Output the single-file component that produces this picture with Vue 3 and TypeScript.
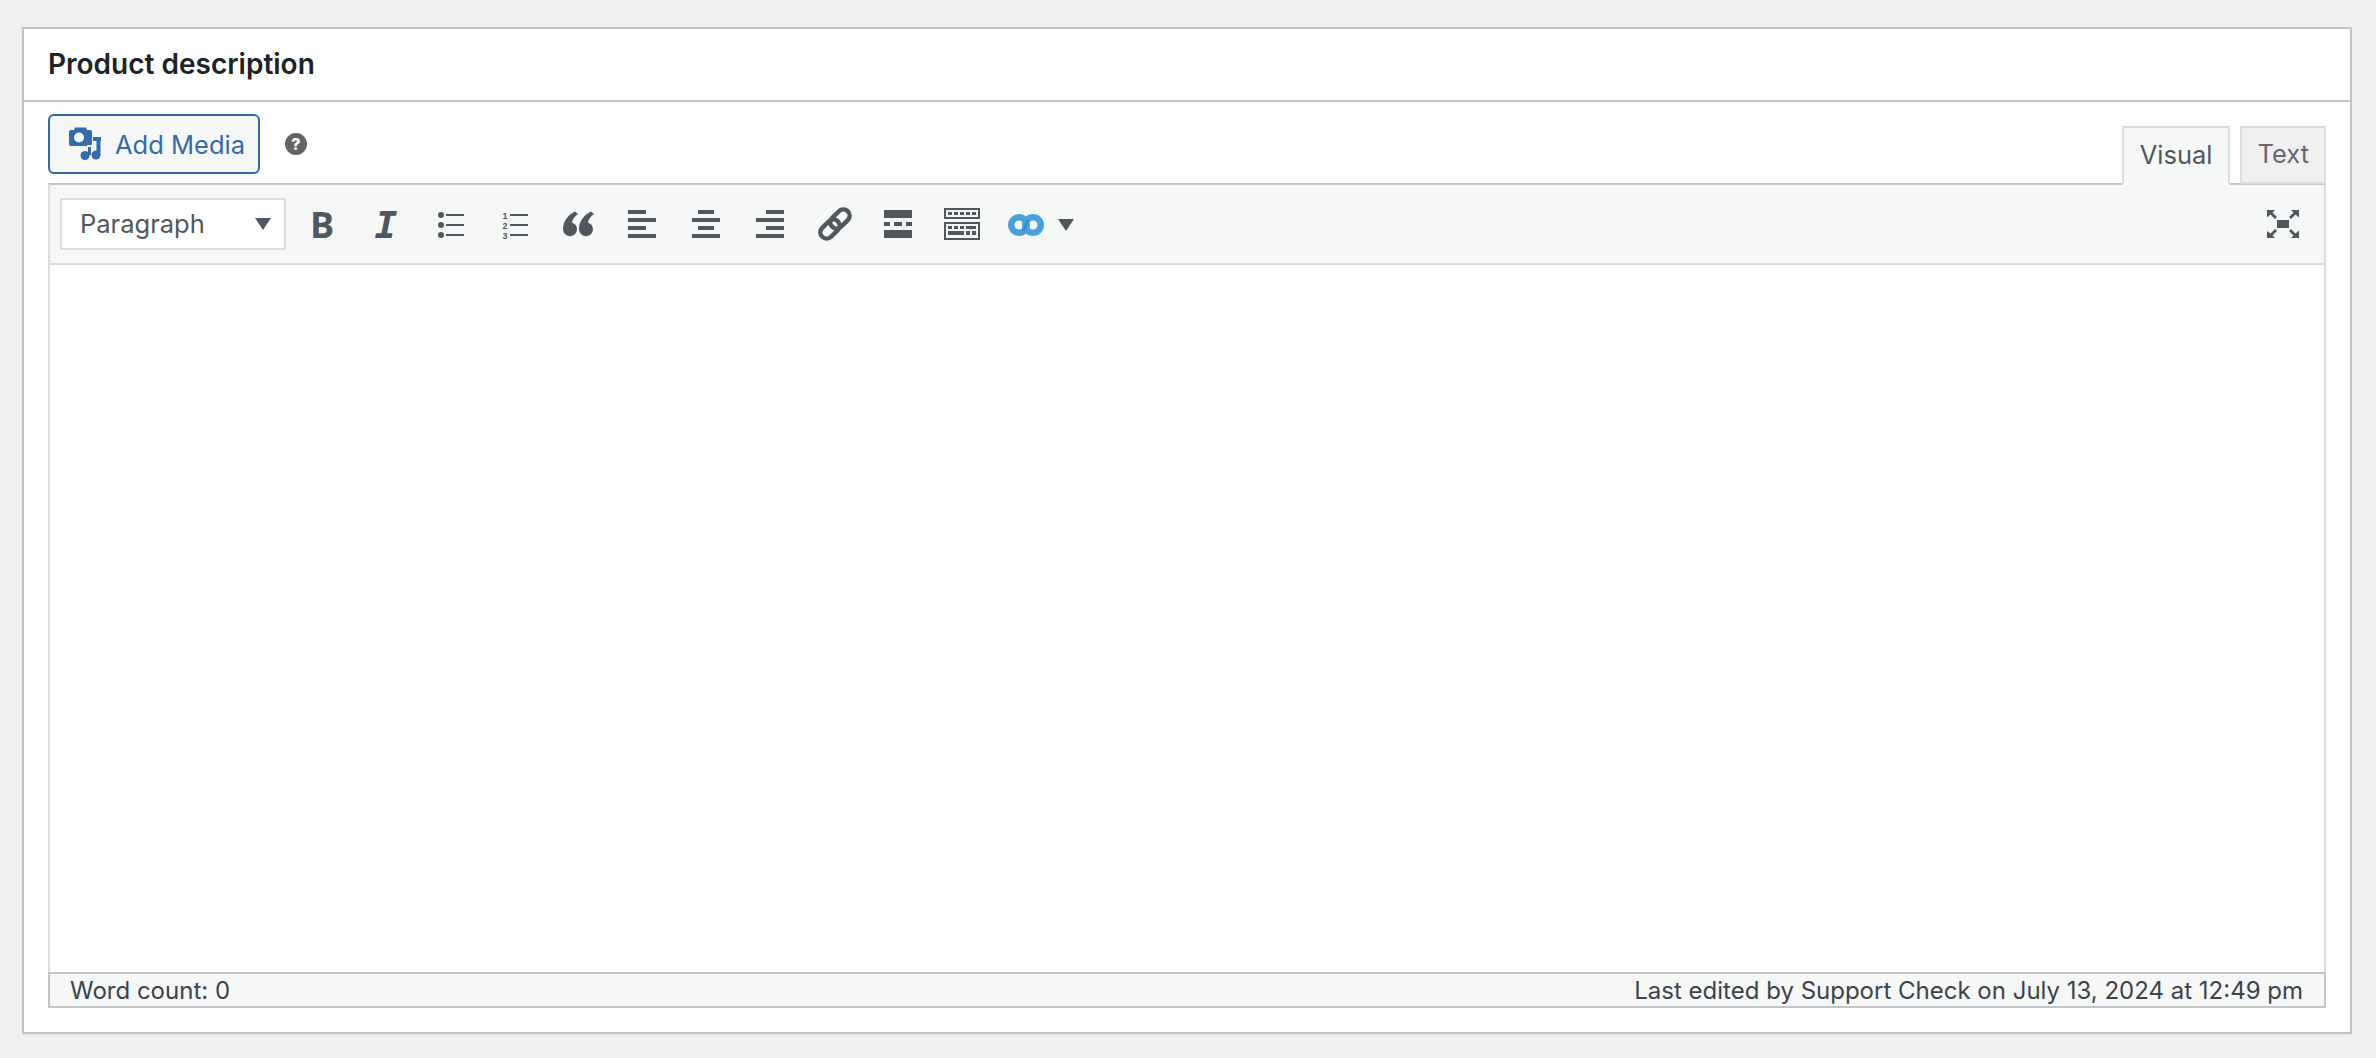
<template>
  <div class="page">
    <section class="metabox">
      <h2 class="title">Product description</h2>
      <div class="inside">
        <div class="editor-tools">
          <button class="add-media" type="button">
            <svg class="media-icon" width="34" height="34" viewBox="0 0 34 34">
              <path d="M3 3h3l1-2.500h11l1 2.500h3a2 2 0 0 1 2 2v12a2 2 0 0 1-2 2H3a2 2 0 0 1-2-2V5a2 2 0 0 1 2-2z" fill="#336bab" />
              <circle cx="11" cy="10.500" r="5" fill="#f6f7f7" />
              <rect x="19" y="18" width="6" height="3" fill="#f6f7f7" />
              <rect x="25" y="10" width="8" height="4" fill="#336bab" />
              <rect x="28.500" y="10" width="4" height="18" fill="#336bab" />
              <circle cx="28" cy="28" r="4.500" fill="#336bab" />
              <rect x="20" y="20" width="3" height="8" fill="#336bab" />
              <circle cx="17" cy="28.500" r="4.500" fill="#336bab" />
            </svg>
            Add Media
          </button>
          <span class="help">?</span>
          <div class="tabs">
            <span class="tab active">Visual</span>
            <span class="tab">Text</span>
          </div>
        </div>

        <div class="editor">
          <div class="toolbar">
            <div class="format-select">
              Paragraph
              <span class="caret"></span>
            </div>
            <div class="tool letter bold">B</div>
            <div class="tool letter italic">I</div>
            <div class="tool">
              <svg width="40" height="40" viewBox="0 0 40 40" fill="#50575e">
                <circle cx="11" cy="10" r="3" /><circle cx="11" cy="20" r="3" /><circle cx="11" cy="30" r="3" />
                <rect x="16" y="9" width="18" height="2" /><rect x="16" y="19" width="18" height="2" /><rect x="16" y="29" width="18" height="2" />
              </svg>
            </div>
            <div class="tool">
              <svg width="40" height="40" viewBox="0 0 40 40" fill="#50575e">
                <text class="ol-num"><tspan x="8.500" y="13.500">1</tspan><tspan x="8.500" y="23.500">2</tspan><tspan x="8.500" y="33.500">3</tspan></text>
                <rect x="16" y="9" width="18" height="2" /><rect x="16" y="19" width="18" height="2" /><rect x="16" y="29" width="18" height="2" />
              </svg>
            </div>
            <div class="tool">
              <svg width="40" height="40" viewBox="0 0 40 40" fill="#50575e">
                <path d="M20 9l-3-2.500C10 10 5 16 5 24.500a7 7 0 1 0 9-7c.5-3.500 3-6.500 6-8.500z" />
                <path d="M36 9l-3-2.500C26 10 21 16 21 24.500a7 7 0 1 0 9-7c.5-3.500 3-6.500 6-8.500z" />
              </svg>
            </div>
            <div class="tool">
              <svg width="40" height="40" viewBox="0 0 40 40" fill="#50575e">
                <rect x="6" y="5" width="18" height="4" /><rect x="6" y="13" width="28" height="4" /><rect x="6" y="21" width="18" height="4" /><rect x="6" y="29" width="28" height="4" />
              </svg>
            </div>
            <div class="tool">
              <svg width="40" height="40" viewBox="0 0 40 40" fill="#50575e">
                <rect x="12" y="5" width="16" height="4" /><rect x="6" y="13" width="28" height="4" /><rect x="12" y="21" width="16" height="4" /><rect x="6" y="29" width="28" height="4" />
              </svg>
            </div>
            <div class="tool">
              <svg width="40" height="40" viewBox="0 0 40 40" fill="#50575e">
                <rect x="16" y="5" width="18" height="4" /><rect x="6" y="13" width="28" height="4" /><rect x="16" y="21" width="18" height="4" /><rect x="6" y="29" width="28" height="4" />
              </svg>
            </div>
            <div class="tool">
              <svg width="40" height="40" viewBox="0 0 40 40" fill="none" stroke="#50575e" stroke-width="4.500">
                <rect x="-11" y="-6.250" width="22" height="12.500" rx="6.250" transform="translate(26 14) rotate(-45)" />
                <rect x="-11" y="-6.250" width="22" height="12.500" rx="6.250" transform="translate(16 24) rotate(-45)" />
              </svg>
            </div>
            <div class="tool">
              <svg width="40" height="40" viewBox="0 0 40 40" fill="#50575e">
                <rect x="6" y="5" width="28" height="8" />
                <rect x="6" y="17" width="6" height="4" /><rect x="16" y="17" width="8" height="4" /><rect x="28" y="17" width="6" height="4" />
                <rect x="6" y="25" width="28" height="8" />
              </svg>
            </div>
            <div class="tool">
              <svg width="40" height="40" viewBox="0 0 40 40" fill="#50575e">
                <path fill-rule="evenodd" d="M2 3h36v11H2zM4 5v7h32V5z" />
                <path fill-rule="evenodd" d="M2 17h36v18H2zM4 19v14h32V19z" />
                <rect x="6" y="7" width="4" height="3" /><rect x="12" y="7" width="4" height="3" /><rect x="18" y="7" width="4" height="3" /><rect x="24" y="7" width="4" height="3" /><rect x="30" y="7" width="4" height="3" />
                <rect x="6" y="21" width="4" height="3" /><rect x="12" y="21" width="4" height="3" /><rect x="18" y="21" width="4" height="3" /><rect x="24" y="21" width="10" height="3" />
                <rect x="6" y="26" width="16" height="4" /><rect x="24" y="26" width="4" height="4" /><rect x="30" y="26" width="4" height="4" />
              </svg>
            </div>
            <div class="tool-split">
              <svg width="40" height="26" viewBox="0 0 40 26" fill="none">
                <circle cx="13" cy="13" r="7.750" stroke="#45a2da" stroke-width="6.500" />
                <circle cx="27" cy="13" r="7.750" stroke="#45a2da" stroke-width="6.500" />
                <path d="M17.500 18.500L22 8" stroke="#3a8cc0" stroke-width="2.500" />
              </svg>
              <span class="caret"></span>
            </div>
            <div class="tool fullscreen">
              <svg width="40" height="40" viewBox="0 0 40 40" fill="#50575e">
                <rect x="14" y="15" width="12" height="8" />
                <path d="M4 5h8l-2.500 2.500 4.500 4.500-2 2-4.500-4.500L4 12.500z" />
                <path d="M36 5h-8l2.500 2.500-4.500 4.500 2 2 4.500-4.500 3.500 3z" />
                <path d="M4 33h8l-2.500-2.500 4.500-4.500-2-2-4.500 4.500L4 26z" />
                <path d="M36 33h-8l2.500-2.500-4.500-4.500 2-2 4.500 4.500 3.500-3z" />
              </svg>
            </div>
          </div>
          <div class="content"></div>
          <div class="status">
            <span>Word count: 0</span>
            <span>Last edited by Support Check on July 13, 2024 at 12:49 pm</span>
          </div>
        </div>
      </div>
    </section>
  </div>
</template>

<script setup lang="ts">
</script>

<style>
html,
body {
  background: #f0f0f1;
}
</style>

<style scoped>
.page {
  height: 1058px;
  box-sizing: border-box;
  padding: 27px 24px 24px 22px;
  font-family: Inter, "Liberation Sans", sans-serif;
  color: #50575e;
}

.metabox {
  height: 100%;
  box-sizing: border-box;
  display: flex;
  flex-direction: column;
  background: #fff;
  border: 2px solid #c3c4c7;
  box-shadow: 0 1px 2px rgba(0, 0, 0, 0.05);
}

.title {
  height: 73px;
  box-sizing: border-box;
  margin: 0;
  padding: 20px 24px 0;
  border-bottom: 2px solid #c3c4c7;
  font-size: 28px;
  line-height: 30px;
  font-weight: 600;
  color: #1d2327;
}

.inside {
  flex: 1;
  display: flex;
  flex-direction: column;
  padding: 12px 24px 24px;
  min-height: 0;
}

.editor-tools {
  height: 69px;
  flex-shrink: 0;
  display: flex;
  align-items: flex-start;
}

.add-media {
  width: 212px;
  height: 60px;
  box-sizing: border-box;
  display: flex;
  align-items: center;
  padding: 0 0 0 18px;
  background: #f6f7f7;
  border: 2px solid #336bab;
  border-radius: 6px;
  font-family: inherit;
  font-size: 25.500px;
  color: #336bab;
}

.media-icon {
  margin-right: 13px;
}

.help {
  width: 22px;
  height: 22px;
  margin: 19px 0 0 25px;
  border-radius: 50%;
  background: #646464;
  color: #fff;
  font-size: 16px;
  font-weight: 800;
  line-height: 22px;
  text-align: center;
}

.tabs {
  margin-left: auto;
  margin-top: 12px;
  display: flex;
  align-items: flex-start;
  gap: 10px;
  position: relative;
}

.tab {
  height: 58px;
  box-sizing: border-box;
  padding: 0 16px 3px;
  display: flex;
  align-items: center;
  background: #f0f0f1;
  border: 2px solid #dcdcde;
  font-size: 25.500px;
  color: #646970;
}

.tab:last-child {
  padding: 0 15px 3px;
}

.tab.active {
  height: 59px;
  background: #f6f7f7;
  border-bottom-color: #f6f7f7;
  color: #50575e;
}

.editor {
  flex: 1;
  display: flex;
  flex-direction: column;
  min-height: 0;
  border: 2px solid #dcdcde;
  border-top-color: #c3c4c7;
  border-bottom: 0;
}

.toolbar {
  height: 80px;
  box-sizing: border-box;
  flex-shrink: 0;
  display: flex;
  align-items: center;
  padding: 0 17px 0 10px;
  background: #f6f7f7;
  border-bottom: 2px solid #dcdcde;
}

.format-select {
  width: 226px;
  height: 52px;
  box-sizing: border-box;
  flex-shrink: 0;
  display: flex;
  align-items: center;
  justify-content: space-between;
  margin-right: 4px;
  padding: 0 13px 1px 18px;
  background: #fff;
  border: 2px solid #dcdcde;
  font-size: 25.500px;
  color: #50575e;
}

.caret {
  width: 0;
  height: 0;
  border-left: 8px solid transparent;
  border-right: 8px solid transparent;
  border-top: 12px solid #50575e;
}

.tool {
  width: 64px;
  height: 40px;
  margin-top: 2px;
  flex-shrink: 0;
  display: flex;
  align-items: center;
  justify-content: center;
}

.letter {
  color: #50575e;
  font-size: 36px;
  line-height: 40px;
}

.bold {
  font-family: "Open Sans", sans-serif;
  font-weight: 700;
}

.italic {
  font-family: "DejaVu Sans Mono", monospace;
  font-style: italic;
  font-weight: 700;
  font-size: 38px;
}

.ol-num {
  font-family: "Liberation Sans", sans-serif;
  font-size: 9px;
  font-weight: 700;
}

.tool-split {
  width: 84px;
  height: 40px;
  margin-left: 12px;
  margin-top: 2px;
  flex-shrink: 0;
  display: flex;
  align-items: center;
  gap: 12px;
}

.fullscreen {
  margin-left: auto;
  width: 48px;
}

.content {
  flex: 1;
  background: #fff;
}

.status {
  height: 36px;
  box-sizing: border-box;
  flex-shrink: 0;
  display: flex;
  justify-content: space-between;
  align-items: center;
  margin: 0 -2px;
  padding: 0 21px 0 20px;
  background: #f6f7f7;
  border: 2px solid #c3c4c7;
  font-size: 24px;
  color: #3c434a;
}
</style>
